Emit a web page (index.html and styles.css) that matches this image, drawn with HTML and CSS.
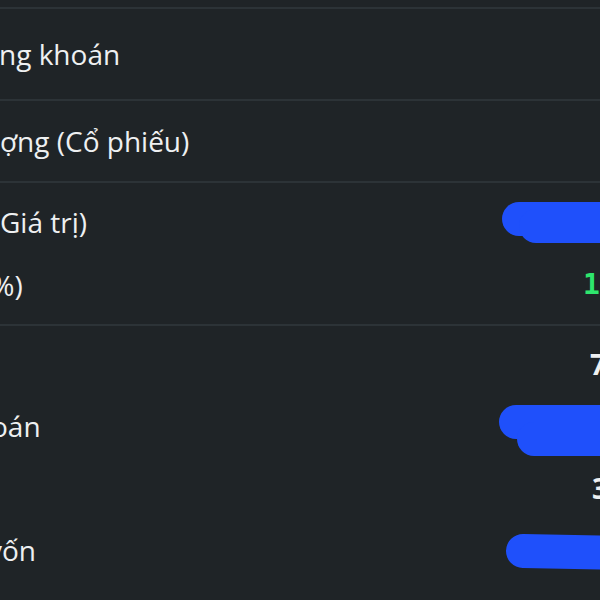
FILE: index.html
```html
<!DOCTYPE html>
<html lang="vi">
<head>
    <meta charset="UTF-8">
    <meta name="viewport" content="width=device-width, initial-scale=1.0">
    <title>Chi tiết danh mục</title>
    <link rel="stylesheet" href="styles.css">
</head>
<body>

    <div class="detail">
        <!-- Ma chung khoan -->
        <div class="section section-first">
            <div class="row row-tall">
                <span class="label cut-n">ng khoán</span>
                <span class="value"></span>
            </div>
        </div>

        <!-- Khoi luong -->
        <div class="section">
            <div class="row row-mid">
                <span class="label">ợng (Cổ phiếu)</span>
                <span class="value"></span>
            </div>
        </div>

        <!-- Lai / lo -->
        <div class="section section-pad">
            <div class="row">
                <span class="label">Giá trị)</span>
                <span class="value">
                    <svg class="scribble" width="100" height="63" viewBox="0 0 100 63">
                        <line x1="19" y1="29" x2="130" y2="29" />
                        <line x1="36" y1="36" x2="130" y2="36" />
                    </svg>
                </span>
            </div>
            <div class="row">
                <span class="label cut-pct">(%)</span>
                <span class="value"><span class="num num-up">13,42%</span></span>
            </div>
        </div>

        <!-- Gia tri -->
        <div class="section section-pad">
            <div class="row row-list">
                <span class="label"></span>
                <span class="value"><span class="num">7.500</span></span>
            </div>
            <div class="row row-list">
                <span class="label cut-o">oán</span>
                <span class="value">
                    <svg class="scribble" width="100" height="62" viewBox="0 0 100 62">
                        <line x1="16" y1="27" x2="130" y2="27" />
                        <line x1="34" y1="44" x2="130" y2="44" />
                    </svg>
                </span>
            </div>
            <div class="row row-list">
                <span class="label"></span>
                <span class="value"><span class="num num-wide">32.150</span></span>
            </div>
            <div class="row row-list">
                <span class="label cut-v">vốn</span>
                <span class="value">
                    <svg class="scribble" width="100" height="62" viewBox="0 0 100 62">
                        <line x1="23" y1="32" x2="130" y2="34" />
                    </svg>
                </span>
            </div>
        </div>
    </div>

</body>
</html>
```

FILE: styles.css
```css
html, body {
    overflow: hidden;
}
body {
    margin: 0;
    width: 600px;
    height: 600px;
    background-color: #1f2427;
    font-family: "Open Sans", "Noto Sans", sans-serif;
    color: #eef0f1;
}
.detail {
    padding-top: 7px;
}
.section {
    border-top: 2px solid #2c3337;
}
.section-pad {
    padding: 7px 0 8px;
}
.row {
    display: flex;
    justify-content: space-between;
    align-items: center;
    height: 63px;
}
.row-tall {
    height: 90px;
}
.row-mid {
    height: 80px;
}
.row-list {
    height: 62px;
}
.label {
    font-size: 28px;
    line-height: 36px;
    white-space: nowrap;
}
.cut-n {
    margin-left: -1px;
}
.cut-pct {
    margin-left: -17px;
}
.cut-o {
    margin-left: -9px;
}
.cut-v {
    margin-left: -12px;
}
.value {
    width: 100px;
    height: 100%;
    display: flex;
    align-items: center;
    white-space: nowrap;
}
.num {
    font-size: 28px;
    font-weight: 700;
    line-height: 36px;
    padding-left: 90px;
}
.num-up {
    color: #2ee56d;
    padding-left: 83px;
    font-family: "DejaVu Sans Mono", monospace;
}
.num-wide {
    padding-left: 92px;
}
.scribble {
    display: block;
    overflow: visible;
}
.scribble line {
    stroke: #1f50fb;
    stroke-width: 34;
    stroke-linecap: round;
}
```
